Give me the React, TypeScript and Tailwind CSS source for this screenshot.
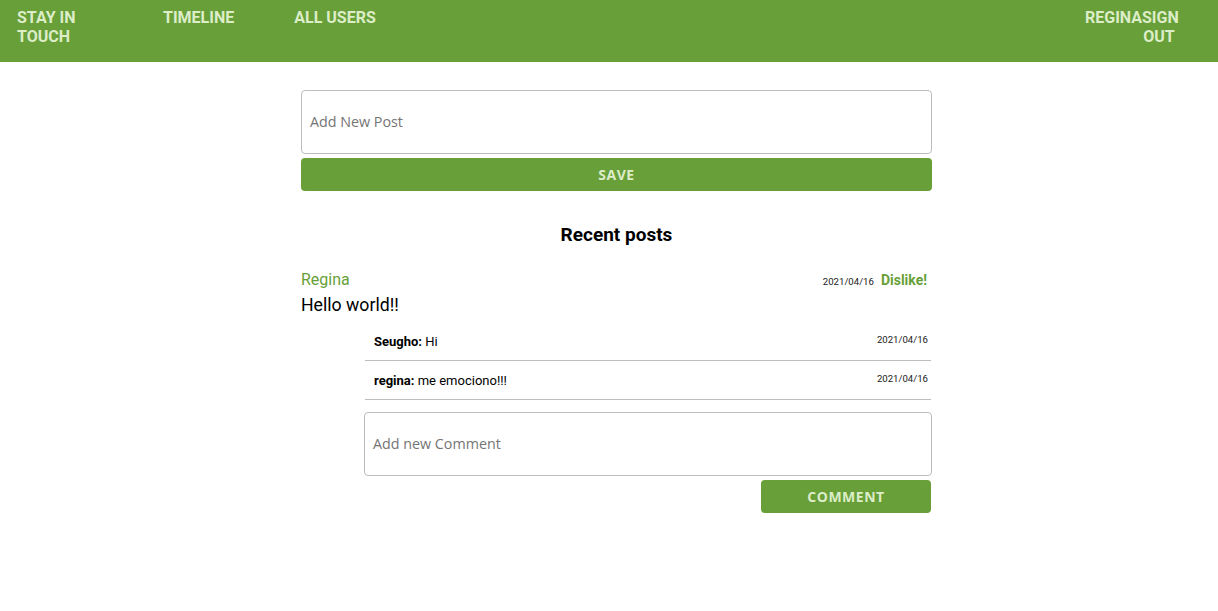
import React, { useState } from 'react';

const roboto = { fontFamily: 'Roboto, "Liberation Sans", sans-serif' };
const ubuntuish = { fontFamily: '"Open Sans", "Noto Sans", sans-serif' };

type Comment = { author: string; text: string; date: string };

const comments: Comment[] = [
  { author: 'Seugho', text: 'Hi', date: '2021/04/16' },
  { author: 'regina', text: 'me emociono!!!', date: '2021/04/16' },
];

function Header() {
  return (
    <header className="h-[62px] bg-[#689f38] text-[#dcedc8] font-bold text-[16px] leading-[19px] uppercase flex justify-between pl-[17px] pr-[38px] pt-[8px]">
      <nav className="flex items-start">
        <a className="w-[90px] cursor-pointer">Stay in touch</a>
        <a className="ml-[56px] cursor-pointer">Timeline</a>
        <a className="ml-[60px] cursor-pointer">All users</a>
      </nav>
      <div className="flex items-start">
        <span>Regina</span>
        <button className="w-[38px] pr-[4px] text-center font-bold uppercase leading-[19px] cursor-pointer">Sign out</button>
      </div>
    </header>
  );
}

function CommentRow({ c }: { c: Comment }) {
  return (
    <div className="h-[39px] border-b border-[#bdbdbd] flex justify-between items-start pl-[9px] pr-[3px] pt-[12px]">
      <p className="text-[13px] leading-[15px] text-black">
        <span className="font-bold">{c.author}:</span> {c.text}
      </p>
      <span className="text-[9.6px] leading-[12px] text-[#212121]">{c.date}</span>
    </div>
  );
}

export default function App() {
  const [post, setPost] = useState('');
  const [comment, setComment] = useState('');

  return (
    <div className="min-h-[611px] bg-white" style={roboto}>
      <Header />
      <main className="flex justify-center pl-[15px]">
        <div className="w-[631px] pt-[28px]">
          <textarea
            value={post}
            onChange={(e) => setPost(e.target.value)}
            placeholder="Add New Post"
            className="block w-full h-[64px] border border-[#bdbdbd] rounded-[4px] px-[8px] pt-[21px] text-[14.3px] leading-[20px] resize-none outline-none placeholder:text-[#757575]"
            style={ubuntuish}
          />
          <button
            className="mt-[4px] w-full h-[33px] bg-[#689f38] rounded-[4px] text-[#dcedc8] text-[14px] font-bold uppercase tracking-[0.5px]"
            style={ubuntuish}
          >
            Save
          </button>

          <h2 className="mt-[32px] text-center text-[19px] leading-[24px] font-bold text-black">Recent posts</h2>

          <article className="mt-[21px]">
            <div className="flex justify-between items-baseline leading-[24px]">
              <span className="text-[16px] text-[#689f38]">Regina</span>
              <div className="flex items-baseline gap-[7px] pr-[5px]">
                <span className="text-[9.6px] text-[#212121]">2021/04/16</span>
                <button className="text-[14px] font-bold text-[#689f38]">Dislike!</button>
              </div>
            </div>
            <p className="text-[17.7px] leading-[23px] text-black">Hello world!!</p>

            <div className="ml-[64px] mr-[1px] mt-[5px]">
              {comments.map((c, i) => (
                <CommentRow key={i} c={c} />
              ))}
            </div>

            <div className="ml-[63px] mt-[12px]">
              <textarea
                value={comment}
                onChange={(e) => setComment(e.target.value)}
                placeholder="Add new Comment"
                className="block w-full h-[64px] border border-[#bdbdbd] rounded-[4px] px-[8px] pt-[21px] text-[14.3px] leading-[20px] resize-none outline-none placeholder:text-[#757575]"
                style={ubuntuish}
              />
              <div className="flex justify-end mt-[4px] pr-[1px]">
                <button
                  className="w-[170px] h-[33px] bg-[#689f38] rounded-[4px] text-[#dcedc8] text-[14px] font-bold uppercase tracking-[0.5px]"
                  style={ubuntuish}
                >
                  Comment
                </button>
              </div>
            </div>
          </article>
        </div>
      </main>
    </div>
  );
}
